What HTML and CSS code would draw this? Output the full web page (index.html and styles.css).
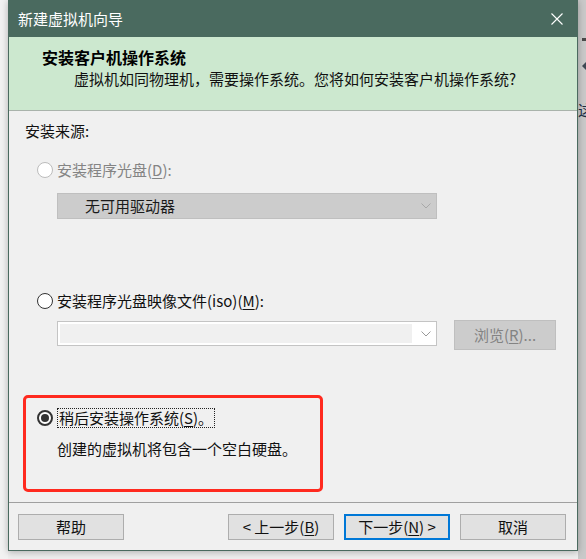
FILE: index.html
```html
<!DOCTYPE html>
<html lang="zh-CN">
<head>
<meta charset="utf-8">
<title>新建虚拟机向导</title>
<link rel="stylesheet" href="styles.css">
</head>
<body>
<div class="desktop">
  <div class="left-gap"></div>
  <div class="window">
    <div class="titlebar">
      <span class="title">新建虚拟机向导</span>
      <svg class="close" width="12" height="12" viewBox="0 0 12 12"><path d="M0.5 0.5L11.5 11.5M11.5 0.5L0.5 11.5" stroke="#ffffff" stroke-width="1.1" fill="none"/></svg>
    </div>
    <div class="header">
      <div class="h-title">安装客户机操作系统</div>
      <div class="h-sub">虚拟机如同物理机，需要操作系统。您将如何安装客户机操作系统?</div>
    </div>
    <div class="content">
      <div class="label">安装来源:</div>
      <div class="radio-row r1 disabled"><span class="radio"></span><span class="rlabel">安装程序光盘(<u>D</u>):</span></div>
      <div class="combo combo-disabled">
        <span class="combo-text">无可用驱动器</span>
        <svg class="chev" width="10" height="6" viewBox="0 0 10 6"><path d="M0.5 0.5L5 5L9.5 0.5" stroke="#a8a8a8" stroke-width="1" fill="none"/></svg>
      </div>
      <div class="radio-row r2"><span class="radio"></span><span class="rlabel">安装程序光盘映像文件(iso)(<u>M</u>):</span></div>
      <div class="iso-row">
        <div class="combo combo-iso">
          <span class="edit"></span>
          <svg class="chev" width="10" height="6" viewBox="0 0 10 6"><path d="M0.5 0.5L5 5L9.5 0.5" stroke="#9a9a9a" stroke-width="1" fill="none"/></svg>
        </div>
        <div class="btn btn-disabled">浏览(<u>R</u>)...</div>
      </div>
      <div class="radio-row r3"><span class="radio checked"></span><span class="rlabel focus">稍后安装操作系统(<u>S</u>)。</span></div>
      <div class="desc">创建的虚拟机将包含一个空白硬盘。</div>
    </div>
    <div class="footer">
      <div class="btn">帮助</div>
      <div class="btn push">&lt; 上一步(<u>B</u>)</div>
      <div class="btn default">下一步(<u>N</u>) &gt;</div>
      <div class="btn">取消</div>
    </div>
  </div>
  <div class="right-strip">
    <span class="bg-mark"></span>
    <span class="bg-tri"></span>
    <span class="bg-char">这</span>
  </div>
</div>
<div class="annot"></div>
</body>
</html>
```

FILE: styles.css
```css
* { box-sizing: border-box; }

html, body {
  margin: 0;
  padding: 0;
}

body {
  width: 586px;
  height: 559px;
  overflow: hidden;
  background: #eeeeee;
  font-family: "Noto Sans CJK SC", "Microsoft YaHei", sans-serif;
  font-size: 15px;
  color: #111111;
  position: relative;
}

u {
  text-decoration: underline;
  text-underline-offset: 2px;
  text-decoration-thickness: 1px;
}

.desktop {
  display: flex;
  height: 559px;
}

.left-gap {
  width: 8px;
  background: #f2f2f2;
}

.right-strip {
  width: 8px;
  background: #c9c9c9;
  position: relative;
  overflow: hidden;
}

.bg-mark {
  position: absolute;
  left: 4px;
  top: 38px;
  width: 6px;
  height: 3px;
  background: #4a4a4a;
}

.bg-tri {
  position: absolute;
  left: 4px;
  top: 61px;
  width: 0;
  height: 0;
  border-top: 5px solid transparent;
  border-bottom: 5px solid transparent;
  border-right: 5px solid #3e4a55;
}

.bg-char {
  position: absolute;
  left: 0px;
  top: 100px;
  font-size: 15px;
  line-height: 20px;
  color: #1c2e46;
}

.window {
  width: 570px;
  height: 551px;
  border: 1px solid #4a6a5f;
  border-top: 0;
  background: #f0f0f0;
  display: flex;
  flex-direction: column;
  box-shadow: 0 1px 7px rgba(0, 0, 0, 0.28);
  position: relative;
  z-index: 1;
}

.titlebar {
  height: 37px;
  flex: none;
  background: #4a6a5f;
  display: flex;
  align-items: center;
  justify-content: space-between;
  padding: 0 14px 0 9px;
}

.title {
  color: #ffffff;
  font-size: 15px;
  line-height: 20px;
}

.close {
  display: block;
  margin-top: 1px;
}

.header {
  height: 74px;
  flex: none;
  background: #cce8cf;
  border-bottom: 1px solid #a9b3ab;
  padding: 9px 0 0 33px;
}

.h-title {
  font-size: 16px;
  font-weight: 700;
  line-height: 22px;
  color: #000000;
}

.h-sub {
  margin: 1px 0 0 32px;
  font-size: 15px;
  line-height: 20px;
  color: #111111;
}

.content {
  flex: 1;
  display: flex;
  flex-direction: column;
  padding: 10px 0 0 16px;
}

.label {
  line-height: 20px;
}

.radio-row {
  display: flex;
  align-items: center;
  height: 20px;
  margin-left: 12px;
}

.r1 { margin-top: 19px; }
.r2 { margin-top: 72px; }
.r3 { margin-top: 58px; }

.radio {
  width: 16px;
  height: 16px;
  border-radius: 50%;
  border: 1px solid #333333;
  background: #ffffff;
  flex: none;
  margin-right: 4px;
  position: relative;
}

.disabled .radio {
  border-color: #bcbcbc;
}

.disabled .rlabel {
  color: #848484;
}

.radio.checked {
  border: 2px solid #333333;
}

.radio.checked::after {
  content: "";
  position: absolute;
  left: 2px;
  top: 2px;
  width: 8px;
  height: 8px;
  border-radius: 50%;
  background: #333333;
}

.rlabel {
  line-height: 20px;
}

.focus {
  border: 1px dotted #222222;
  line-height: 18px;
  padding: 0 1px;
}

.combo {
  width: 380px;
  display: flex;
  align-items: center;
  margin-left: 32px;
}

.combo-disabled {
  margin-top: 13px;
  height: 26px;
  background: #cccccc;
  border: 1px solid #bfbfbf;
  padding: 0 5px 0 27px;
  justify-content: space-between;
}

.combo-text {
  line-height: 20px;
  color: #1a1a1a;
}

.iso-row {
  display: flex;
  align-items: flex-start;
  margin-top: 9px;
}

.combo-iso {
  margin-top: 1px;
  height: 25px;
  background: #ffffff;
  border: 1px solid #c4c4c4;
  padding: 2px 5px 2px 2px;
  justify-content: space-between;
}

.edit {
  width: 352px;
  height: 19px;
  background: #f0f0f0;
}

.btn {
  width: 106px;
  height: 26px;
  border: 1px solid #adadad;
  background: #e1e1e1;
  display: flex;
  align-items: center;
  justify-content: center;
  line-height: 20px;
  color: #111111;
}

.btn-disabled {
  width: 102px;
  height: 30px;
  margin-left: 17px;
  background: #cccccc;
  border-color: #bfbfbf;
  color: #838383;
}

.desc {
  margin: 11px 0 0 32px;
  line-height: 20px;
}

.footer {
  height: 48px;
  flex: none;
  border-top: 1px solid #a0a0a0;
  display: flex;
  align-items: flex-start;
  gap: 10px;
  padding: 11px 11px 10px 9px;
}

.push {
  margin-left: auto;
}

.default {
  border: 2px solid #0078d7;
}

.annot {
  position: absolute;
  left: 23px;
  top: 395px;
  width: 300px;
  height: 97px;
  border: 3px solid #ff2a1f;
  border-radius: 5px;
  z-index: 5;
}
```
